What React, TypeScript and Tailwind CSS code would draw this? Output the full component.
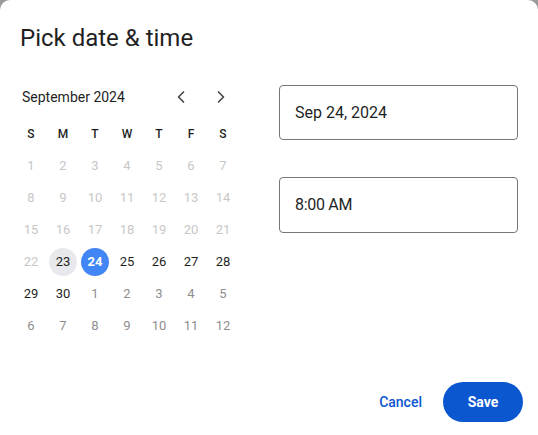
import React from "react";
import { ChevronLeft, ChevronRight } from "lucide-react";

type Day = { n: number; kind: "past" | "cur" | "next" };

const buildDays = (): Day[] => {
  const days: Day[] = [];
  for (let i = 1; i <= 22; i++) days.push({ n: i, kind: "past" });
  for (let i = 23; i <= 30; i++) days.push({ n: i, kind: "cur" });
  for (let i = 1; i <= 12; i++) days.push({ n: i, kind: "next" });
  return days;
};

const weekdays = ["S", "M", "T", "W", "T", "F", "S"];

const App: React.FC = () => {
  const days = buildDays();

  return (
    <div className="w-[538px] h-[435px] bg-[#9a9a9a]" style={{ fontFamily: "Roboto, 'Open Sans', sans-serif" }}>
      <div className="w-full h-full bg-white rounded-t-[10px] flex flex-col">
        {/* Title */}
        <h1 className="pl-5 pt-[23px] text-[24px] leading-[30px] text-[#1f1f1f] font-normal">
          Pick date &amp; time
        </h1>

        <div className="flex ml-[15px] mt-[28px]">
          {/* Calendar */}
          <div className="w-[224px]">
            <div className="flex items-center h-8">
              <span className="pl-[7px] text-[14px] text-[#1f1f1f]">September 2024</span>
              <div className="ml-auto mr-[-2px] flex">
                <button className="w-10 h-8 flex items-center justify-center text-[#444746]">
                  <ChevronLeft size={20} strokeWidth={2} />
                </button>
                <button className="w-10 h-8 flex items-center justify-center text-[#444746]">
                  <ChevronRight size={20} strokeWidth={2} />
                </button>
              </div>
            </div>

            <div className="grid grid-cols-7 mt-[5px]">
              {weekdays.map((d, i) => (
                <div key={i} className="h-8 flex items-center justify-center text-[12px] font-medium text-[#1f1f1f]">
                  {d}
                </div>
              ))}
              {days.map((d, i) => {
                const selected = d.kind === "cur" && d.n === 24;
                const today = d.kind === "cur" && d.n === 23;
                let cls = "text-[#1f1f1f]";
                if (d.kind === "past") cls = "text-[#c7c7c7]";
                if (d.kind === "next") cls = "text-[#8e8e8e]";
                if (today) cls = "bg-[#e8e9ec] text-[#1f1f1f]";
                if (selected) cls = "bg-[#4285f4] text-white font-bold";
                return (
                  <div key={i} className="h-8 flex items-center justify-center">
                    <span className={`w-7 h-7 rounded-full flex items-center justify-center text-[13px] ${cls}`}>
                      {d.n}
                    </span>
                  </div>
                );
              })}
            </div>
          </div>

          {/* Inputs */}
          <div className="ml-[40px] w-[239px] pt-[4px] flex flex-col gap-[37px]">
            <div className="h-[55px] border border-[#747775] rounded-[4px] flex items-center pl-[15px] text-[16px] text-[#1f1f1f]">
              Sep 24, 2024
            </div>
            <div className="h-[56px] border border-[#747775] rounded-[4px] flex items-center pl-[15px] text-[16px] text-[#1f1f1f] tracking-[-0.3px]">
              8:00 AM
            </div>
          </div>
        </div>

        {/* Footer */}
        <div className="mt-auto flex justify-end items-center gap-[9px] pr-[15px] pb-[13px]">
          <button className="h-10 px-3 text-[14px] font-medium text-[#0b57d0]">Cancel</button>
          <button className="h-10 w-20 rounded-full bg-[#0b57d0] text-white text-[14px] font-bold">Save</button>
        </div>
      </div>
    </div>
  );
};

export default App;
